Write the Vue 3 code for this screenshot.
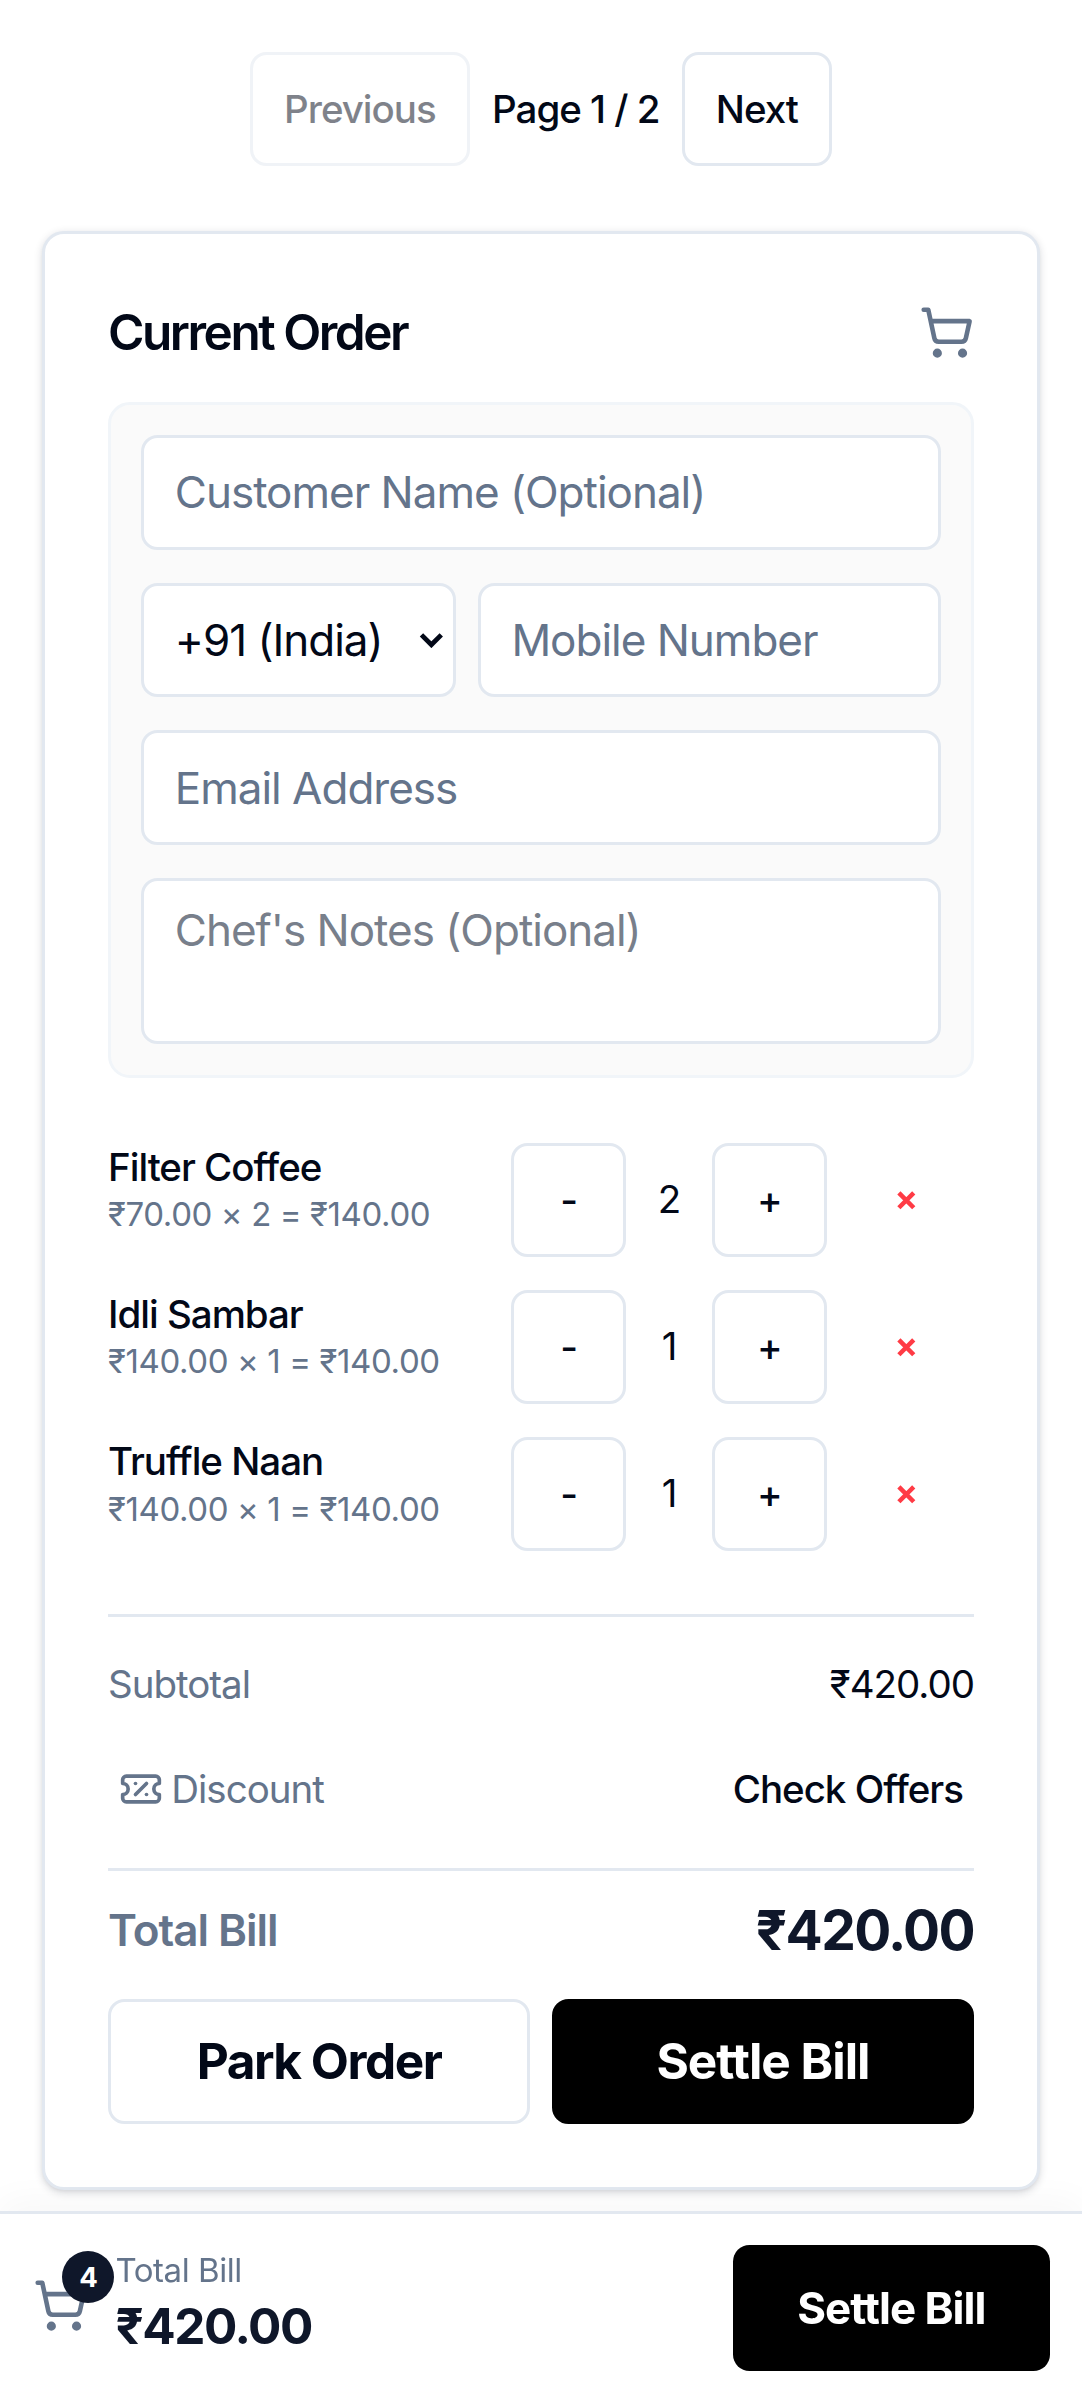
<template>
  <div class="page">
    <!-- Pagination -->
    <div class="pager">
      <button class="btn" disabled>Previous</button>
      <span class="page-label">Page 1 / 2</span>
      <button class="btn">Next</button>
    </div>

    <!-- Order card -->
    <section class="card">
      <div class="card-head">
        <h2>Current Order</h2>
        <svg class="cart" viewBox="0 0 24 24" fill="none" stroke="currentColor" stroke-width="2" stroke-linecap="round" stroke-linejoin="round">
          <circle cx="8" cy="21" r="1" />
          <circle cx="19" cy="21" r="1" />
          <path d="M2.05 2.05h2l2.66 12.42a2 2 0 0 0 2 1.58h9.78a2 2 0 0 0 1.95-1.57l1.65-7.43H5.12" />
        </svg>
      </div>

      <div class="customer">
        <input class="field" placeholder="Customer Name (Optional)" />
        <div class="phone">
          <div class="code">
            <select class="field">
              <option>+91 (India)</option>
            </select>
            <svg class="chevron" viewBox="0 0 12 8" fill="none" stroke="currentColor" stroke-width="2.3">
              <path d="M1.2 1.4 6 6.2l4.8-4.8" />
            </svg>
          </div>
          <input class="field" placeholder="Mobile Number" />
        </div>
        <input class="field" placeholder="Email Address" />
        <textarea class="notes" placeholder="Chef's Notes (Optional)"></textarea>
      </div>

      <ul class="items">
        <li v-for="item in items" :key="item.name" class="item">
          <div class="item-info">
            <div class="item-name">{{ item.name }}</div>
            <div class="item-sub">₹{{ item.price.toFixed(2) }} × {{ item.qty }} = ₹{{ (item.price * item.qty).toFixed(2) }}</div>
          </div>
          <button class="btn qty-btn">-</button>
          <span class="qty">{{ item.qty }}</span>
          <button class="btn qty-btn">+</button>
          <button class="remove">
            <svg viewBox="0 0 10 10" fill="none" stroke="#ff3b45" stroke-width="2.2">
              <path d="M1.4 1.4l7.2 7.2M8.6 1.4l-7.2 7.2" />
            </svg>
          </button>
        </li>
      </ul>

      <div class="summary">
        <div class="row">
          <span class="muted">Subtotal</span>
          <span>₹420.00</span>
        </div>
        <div class="row discount">
          <span class="muted discount-label">
            <svg viewBox="0 0 24 24" fill="none" stroke="currentColor" stroke-width="2" stroke-linecap="round" stroke-linejoin="round">
              <path d="M2 9a3 3 0 1 1 0 6v2a2 2 0 0 0 2 2h16a2 2 0 0 0 2-2v-2a3 3 0 1 1 0-6V7a2 2 0 0 0-2-2H4a2 2 0 0 0-2 2Z" />
              <path d="M9 9h.01" />
              <path d="m15 9-6 6" />
              <path d="M15 15h.01" />
            </svg>
            Discount
          </span>
          <span class="offers">Check Offers</span>
        </div>
      </div>

      <div class="total">
        <span class="total-label">Total Bill</span>
        <span class="total-value">₹420.00</span>
      </div>

      <div class="actions">
        <button class="action park">Park Order</button>
        <button class="action settle">Settle Bill</button>
      </div>
    </section>

    <!-- Sticky bottom bar -->
    <footer class="bar">
      <div class="bar-left">
        <div class="bar-cart">
          <svg viewBox="0 0 24 24" fill="none" stroke="currentColor" stroke-width="2" stroke-linecap="round" stroke-linejoin="round">
            <circle cx="8" cy="21" r="1" />
            <circle cx="19" cy="21" r="1" />
            <path d="M2.05 2.05h2l2.66 12.42a2 2 0 0 0 2 1.58h9.78a2 2 0 0 0 1.95-1.57l1.65-7.43H5.12" />
          </svg>
          <span class="badge">4</span>
        </div>
        <div>
          <div class="bar-label">Total Bill</div>
          <div class="bar-value">₹420.00</div>
        </div>
      </div>
      <button class="bar-settle">Settle Bill</button>
    </footer>
  </div>
</template>

<script setup>
const items = [
  { name: "Filter Coffee", price: 70, qty: 2 },
  { name: "Idli Sambar", price: 140, qty: 1 },
  { name: "Truffle Naan", price: 140, qty: 1 },
];
</script>

<style>
html,
body {
  background: #fff;
}
</style>

<style scoped>
/* screenshot was taken on a phone at 2.75x */
.page {
  zoom: 2.75;
  height: 873.45px;
  overflow: hidden;
  font-family: Inter, "Noto Sans", sans-serif;
  letter-spacing: -0.023em;
  color: #020817;
  background: #fff;
  box-sizing: border-box;
  padding-top: 19px;
}

button,
input,
select,
textarea {
  font-family: inherit;
  letter-spacing: inherit;
  box-sizing: border-box;
}

.pager {
  display: flex;
  justify-content: center;
  align-items: center;
  gap: 8px;
  height: 41.5px;
  margin-bottom: 23.5px;
  font-size: 14px;
}

.btn {
  height: 41.5px;
  padding: 0 11.4px;
  background: #fff;
  border: 1.1px solid #e2e8f0;
  border-radius: 6px;
  font-size: 14px;
  font-weight: 500;
  color: #020817;
}

.btn:disabled {
  opacity: 0.5;
}

.page-label {
  font-weight: 500;
}

.card {
  margin: 0 15.3px;
  padding: 22.9px;
  background: #fff;
  border: 1.1px solid #e2e8f0;
  border-radius: 8px;
  box-shadow: 0 1px 3px rgba(15, 23, 42, 0.14), 0 1px 2px -1px rgba(15, 23, 42, 0.1);
}

.card-head {
  display: flex;
  justify-content: space-between;
  align-items: center;
  margin-bottom: 12.2px;
}

.card-head h2 {
  margin: 0;
  font-size: 18px;
  font-weight: 600;
  line-height: 26px;
  letter-spacing: -0.05em;
}

.cart {
  width: 20px;
  height: 20px;
  color: #64748b;
}

.customer {
  display: flex;
  flex-direction: column;
  gap: 12px;
  padding: 10.9px 10.9px 11.3px;
  background: #fafafa;
  border: 1.1px solid #f1f5f9;
  border-radius: 8px;
}

.field,
.notes {
  width: 100%;
  background: #fff;
  border: 1.1px solid #e2e8f0;
  border-radius: 6px;
  font-size: 16px;
  color: #020817;
  outline: none;
}

.field {
  height: 41.7px;
  padding: 0 11.2px;
}

.field::placeholder {
  color: #64748b;
}

.notes {
  display: block;
  height: 60.2px;
  padding: 8px 11.2px;
  resize: none;
}

.notes::placeholder {
  color: #787f8b;
}

.phone {
  display: flex;
  gap: 8px;
}

.code {
  position: relative;
  flex: 0 0 114.4px;
}

.code select {
  appearance: none;
  display: block;
}

.chevron {
  position: absolute;
  right: 4.3px;
  top: 50%;
  width: 9px;
  height: 6px;
  margin-top: -3px;
  color: #020817;
  pointer-events: none;
}

.phone > .field {
  flex: 1;
  min-width: 0;
}

.items {
  list-style: none;
  margin: 23.7px 0 22.8px;
  padding: 0;
  display: flex;
  flex-direction: column;
  gap: 12px;
}

.item {
  display: flex;
  align-items: flex-start;
  height: 41.5px;
}

.item-info {
  flex: 1;
  min-width: 0;
}

.item-name {
  font-size: 14px;
  font-weight: 500;
  line-height: 18px;
}

.item-sub {
  font-size: 12px;
  line-height: 16px;
  letter-spacing: -0.012em;
  color: #64748b;
}

.qty-btn {
  flex: 0 0 41.8px;
  width: 41.8px;
  padding: 0;
}

.qty {
  width: 31.2px;
  line-height: 41px;
  text-align: center;
  font-size: 14px;
}

.remove {
  flex: 0 0 49.5px;
  height: 41.5px;
  margin-left: 4px;
  padding: 0;
  background: none;
  border: 0;
  display: flex;
  align-items: center;
  justify-content: center;
}

.remove svg {
  width: 7.5px;
  height: 7.5px;
}

.summary {
  border-top: 1.1px solid #e2e8f0;
  border-bottom: 1.1px solid #e2e8f0;
  padding: 12.4px 0 0;
  font-size: 14px;
}

.row {
  display: flex;
  justify-content: space-between;
  align-items: center;
  height: 24px;
}

.discount {
  margin-top: 14.1px;
  margin-bottom: 16.7px;
  padding: 0 4px;
}

.muted {
  color: #64748b;
}

.discount-label {
  display: flex;
  align-items: center;
  gap: 3px;
}

.discount-label svg {
  width: 16px;
  height: 16px;
}

.offers {
  font-weight: 500;
}

.total {
  display: flex;
  justify-content: space-between;
  align-items: center;
  height: 28px;
  margin: 7.5px 0 11px;
}

.total-label {
  font-size: 16px;
  font-weight: 600;
  color: #64748b;
}

.total-value {
  font-size: 20px;
  font-weight: 700;
  letter-spacing: -0.03em;
  color: #0f172a;
}

.actions {
  display: flex;
  gap: 8px;
}

.action {
  flex: 1;
  height: 45.7px;
  border-radius: 6px;
  font-size: 18px;
  font-weight: 700;
}

.park {
  background: #fff;
  border: 1.1px solid #e2e8f0;
  color: #020817;
  letter-spacing: -0.03em;
}

.settle {
  background: #000;
  border: 1.1px solid #000;
  color: #fff;
}

.bar {
  position: fixed;
  left: 0;
  right: 0;
  bottom: 0;
  height: 69.5px;
  box-sizing: border-box;
  display: flex;
  justify-content: space-between;
  align-items: center;
  padding: 0 11.7px 0 12px;
  background: #fff;
  border-top: 1.1px solid #e2e8f0;
  box-shadow: 0 -4px 12px rgba(15, 23, 42, 0.03);
}

.bar-left {
  display: flex;
  align-items: center;
  padding-bottom: 1.5px;
}

.bar-cart {
  position: relative;
  width: 20px;
  height: 20px;
  margin-right: 10px;
  color: #64748b;
}

.bar-cart svg {
  width: 20px;
  height: 20px;
  display: block;
}

.badge {
  position: absolute;
  top: -10px;
  left: 10.5px;
  width: 19px;
  height: 19px;
  border-radius: 50%;
  background: #0f172a;
  color: #fff;
  font-size: 10px;
  font-weight: 700;
  display: flex;
  align-items: center;
  justify-content: center;
}

.bar-label {
  font-size: 12px;
  line-height: 15.5px;
  letter-spacing: -0.014em;
  color: #64748b;
}

.bar-value {
  font-size: 18px;
  font-weight: 700;
  line-height: 26px;
  letter-spacing: -0.03em;
  color: #0f172a;
}

.bar-settle {
  width: 115.3px;
  height: 45.7px;
  background: #000;
  color: #fff;
  border: 0;
  border-radius: 6px;
  font-size: 16px;
  font-weight: 700;
}
</style>
